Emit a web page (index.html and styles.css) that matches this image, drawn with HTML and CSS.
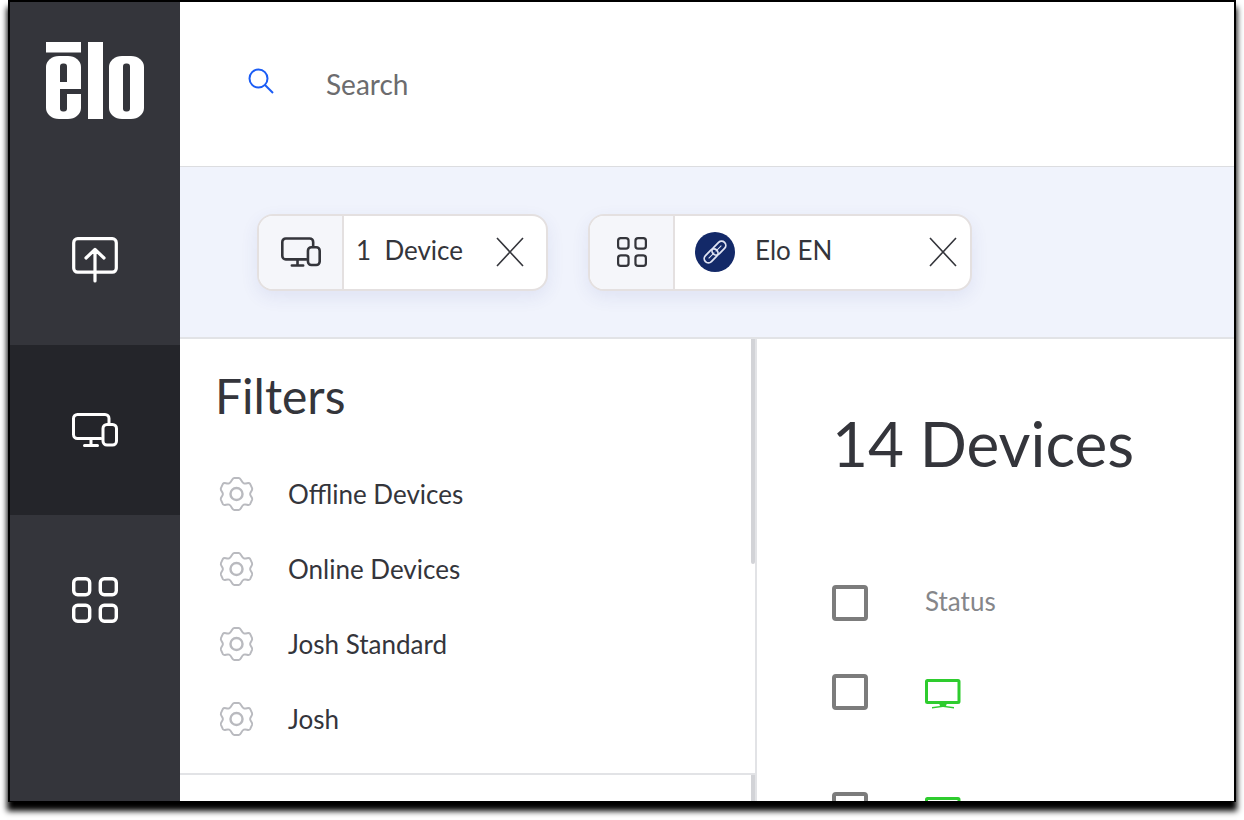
FILE: index.html
```html
<!DOCTYPE html>
<html lang="en">
<head>
<meta charset="utf-8">
<title>Elo Devices</title>
<link rel="stylesheet" href="styles.css">
</head>
<body>
<svg class="defs" aria-hidden="true">
  <symbol id="devices" viewBox="0 0 46 46">
    <g fill="none" stroke="currentColor" stroke-width="3" stroke-linecap="round" stroke-linejoin="round">
      <path d="M29 31.500H5.500a4 4 0 0 1-4-4V11.500a4 4 0 0 1 4-4H33a4 4 0 0 1 4 4V16M19 32v6M12.500 38.500h13"/>
      <rect x="31" y="17.500" width="13.500" height="20.500" rx="4"/>
    </g>
  </symbol>
  <symbol id="grid" viewBox="0 0 46 46">
    <g fill="none" stroke="currentColor" stroke-width="3.400">
      <rect x="1.700" y="1.700" width="16" height="16" rx="4"/>
      <rect x="28.300" y="1.700" width="16" height="16" rx="4"/>
      <rect x="1.700" y="28.300" width="16" height="16" rx="4"/>
      <rect x="28.300" y="28.300" width="16" height="16" rx="4"/>
    </g>
  </symbol>
  <symbol id="gear" viewBox="0 0 36 36">
    <g fill="none" stroke="currentColor" stroke-width="2" stroke-linejoin="round">
      <path d="M15.500 1.500h5c2 0 2.500 4.500 5 5.500s5-1.500 6.500.5l2 4.500c1 2.500-2 3.500-2 6s3 3.500 2 6l-2 4.500c-1.500 2-4-.5-6.500.5s-3 5.500-5 5.500h-5c-2 0-2.500-4.500-5-5.500s-5 1.500-6.500-.5l-2-4.500c-1-2.500 2-3.500 2-6s-3-3.500-2-6l2-4.500c1.500-2 4 .5 6.500-.5s3-5.500 5-5.500z"/>
      <circle cx="18" cy="18" r="6.200" stroke-width="2.500"/>
    </g>
  </symbol>
  <symbol id="close" viewBox="0 0 28 30">
    <path d="M1 1l26 28M27 1L1 29" fill="none" stroke="currentColor" stroke-width="1.600"/>
  </symbol>
  <symbol id="screen" viewBox="0 0 36 30">
    <rect x="1.500" y="1.500" width="32.500" height="22" rx="1" fill="none" stroke="currentColor" stroke-width="3"/>
    <path d="M14 24h8l-1 3 8 1v1.500l-11-1.500-11 1.500V28l8-1z" fill="currentColor"/>
  </symbol>
</svg>
<div class="app">
  <nav class="sidebar" aria-label="Main">
    <a class="brand" href="#" aria-label="Elo">
      <svg width="98" height="78" viewBox="0 0 98 78" fill="#fff">
        <rect width="35" height="10.500"/>
        <rect y="14" width="35" height="63" rx="13" ry="11"/>
        <rect class="cut" x="14" y="21.500" width="7" height="18.500" rx="3"/>
        <rect class="cut" x="14" y="33" width="7" height="7"/>
        <rect class="cut" x="14" y="47" width="22" height="5"/>
        <rect class="cut" x="14" y="47" width="7" height="22.500" rx="3"/>
        <rect x="42" width="15" height="77"/>
        <rect x="63" y="14" width="35" height="63" rx="13" ry="11"/>
        <rect class="cut" x="77" y="21.500" width="7" height="48" rx="3"/>
      </svg>
    </a>
    <a class="nav-item" href="#" aria-label="Publish">
      <svg class="nav-icon" viewBox="0 0 46 46" fill="none" stroke="currentColor" stroke-width="3.200" stroke-linecap="round" stroke-linejoin="round">
        <rect x="1.700" y="1.700" width="42.600" height="33.500" rx="4"/>
        <path d="M23 44V13M14 21l9-8.500 9 8.500"/>
      </svg>
    </a>
    <a class="nav-item active" href="#" aria-label="Devices"><svg class="nav-icon"><use href="#devices"/></svg></a>
    <a class="nav-item" href="#" aria-label="Apps"><svg class="nav-icon"><use href="#grid"/></svg></a>
  </nav>
  <div class="page">
    <header class="search">
      <svg class="search-icon" viewBox="0 0 26 26" fill="none" stroke="#1a5cf5" stroke-width="2"><circle cx="10.500" cy="10.500" r="9"/><path d="M17 17l8 8"/></svg>
      <input class="search-input" type="search" placeholder="Search" aria-label="Search">
    </header>
    <div class="chips">
      <div class="chip">
        <span class="chip-kind"><svg class="chip-icon"><use href="#devices"/></svg></span>
        <span class="chip-label">1&nbsp; Device</span>
        <button class="close" aria-label="Remove device"><svg class="close-icon"><use href="#close"/></svg></button>
      </div>
      <div class="chip chip-app">
        <span class="chip-kind"><svg class="chip-icon"><use href="#grid"/></svg></span>
        <svg class="link-icon" viewBox="0 0 40 40">
          <circle cx="20" cy="20" r="20" fill="#132968"/>
          <g fill="none" stroke="#dfe3f2" stroke-width="1.800" transform="rotate(-45 20 20)">
            <rect x="6.500" y="15.800" width="16" height="8.400" rx="4.200"/>
            <rect x="17.500" y="15.800" width="16" height="8.400" rx="4.200"/>
            <path d="M11 20h8M21 20h8" stroke-width="1"/>
          </g>
        </svg>
        <span class="chip-label">Elo EN</span>
        <button class="close" aria-label="Remove Elo EN"><svg class="close-icon"><use href="#close"/></svg></button>
      </div>
    </div>
    <div class="content">
      <aside class="filters">
        <section class="filter-group">
          <h2>Filters</h2>
          <ul>
            <li><a href="#"><svg class="gear"><use href="#gear"/></svg>Offline Devices</a></li>
            <li><a href="#"><svg class="gear"><use href="#gear"/></svg>Online Devices</a></li>
            <li><a href="#"><svg class="gear"><use href="#gear"/></svg>Josh Standard</a></li>
            <li><a href="#"><svg class="gear"><use href="#gear"/></svg>Josh</a></li>
          </ul>
          <span class="thumb"></span>
        </section>
        <section class="filter-group next"><span class="thumb"></span></section>
      </aside>
      <main class="devices">
        <h1>14 Devices</h1>
        <table>
          <thead>
            <tr><th class="pick"><input type="checkbox" aria-label="Select all devices"></th><th>Status</th></tr>
          </thead>
          <tbody>
            <tr><td class="pick"><input type="checkbox" aria-label="Select device 1"></td><td><svg class="screen" role="img" aria-label="Online"><use href="#screen"/></svg></td></tr>
            <tr><td class="pick"><input type="checkbox" aria-label="Select device 2"></td><td><svg class="screen" role="img" aria-label="Online"><use href="#screen"/></svg></td></tr>
          </tbody>
        </table>
      </main>
    </div>
  </div>
</div>
</body>
</html>
```
FILE: styles.css
```css
* { box-sizing: border-box; }
body {
  margin: 0;
  height: 100vh;
  padding: 0 8px 18px;
  background: #fff;
  color: #34353b;
  font-family: Lato, "Open Sans", sans-serif;
  font-size: 26px;
  overflow: hidden;
}
a { color: inherit; text-decoration: none; }
svg { display: block; flex: none; }
.defs { position: absolute; width: 0; height: 0; }
.app {
  display: flex;
  height: 100%;
  border: 2px solid #000;
  border-bottom-width: 1px;
  background: #fff;
  box-shadow: 0 8px 6px 1px #000;
  overflow: hidden;
}
.sidebar { flex: none; width: 170px; background: #34353b; color: #fff; }
.brand { display: flex; justify-content: center; height: 173px; padding-top: 40px; }
.brand .cut { fill: #34353b; }
.nav-item { display: flex; align-items: center; justify-content: center; height: 170px; }
.nav-item.active { background: #24252a; }
.nav-icon { width: 46px; height: 46px; }
.page { flex: 1; min-width: 0; display: flex; flex-direction: column; }
.search {
  flex: none;
  display: flex;
  align-items: center;
  gap: 52px;
  height: 165px;
  padding: 0 68px;
  border-bottom: 1px solid #dcdde0;
}
.search-icon { width: 26px; height: 26px; margin-bottom: 6px; }
.search-input {
  flex: 1;
  min-width: 0;
  padding: 0;
  border: 0;
  outline: 0;
  background: none;
  font: inherit;
  font-size: 28px;
  color: inherit;
}
.search-input::placeholder { color: #6c6c6e; opacity: 1; }
.chips {
  flex: none;
  display: flex;
  align-items: center;
  gap: 40px;
  height: 172px;
  padding: 0 77px;
  background: #f0f3fc;
  border-bottom: 2px solid #e2e3e6;
}
.chip {
  display: flex;
  align-items: center;
  width: 291px;
  height: 77px;
  border: 2px solid #e4e0e0;
  border-radius: 16px;
  background: #fff;
  box-shadow: 0 6px 18px rgba(60, 70, 150, .09);
  overflow: hidden;
}
.chip-app { width: 384px; }
.chip-kind {
  flex: none;
  align-self: stretch;
  display: flex;
  align-items: center;
  justify-content: center;
  width: 85px;
  margin-right: 12px;
  border-right: 2px solid #e4e0e0;
  background: #f5f6fa;
}
.chip-icon { width: 40px; height: 40px; }
.chip-app .chip-icon { width: 38px; height: 30px; }
.chip-app .chip-kind { margin-right: 20px; }
.chip-label { margin-bottom: 4px; white-space: nowrap; }
.link-icon { width: 40px; height: 40px; margin-right: 20px; }
.close { margin: 0 22px 0 auto; padding: 0; border: 0; background: none; color: #34353b; }
.chip-app .close { margin-right: 13px; }
.close-icon { width: 28px; height: 30px; }
.content { flex: 1; min-height: 0; display: flex; }
.filters {
  flex: none;
  display: flex;
  flex-direction: column;
  width: 577px;
  border-right: 2px solid #e2e3e6;
}
.filter-group { position: relative; flex: none; padding: 27px 35px 17px; border-bottom: 2px solid #e2e3e6; }
.filter-group.next { flex: 1; border: 0; }
.thumb { position: absolute; top: 0; right: 0; width: 4px; height: 225px; border-radius: 0 0 2px 2px; background: #d2d3d7; }
.next .thumb { height: 100%; }
h1, h2 { margin: 0; font-weight: 400; }
h2 { font-size: 48px; line-height: 60px; }
ul { margin: 30px 0 0; padding: 0; list-style: none; }
li a { display: flex; align-items: center; gap: 34px; height: 75px; padding-left: 4px; }
.gear { width: 35px; height: 36px; color: #b9babf; }
.devices { flex: 1; min-width: 0; padding: 66px 75px 0; overflow: hidden; }
h1 { font-size: 62px; line-height: 76px; white-space: nowrap; }
table { width: 100%; margin-top: 92px; border-collapse: collapse; }
th, td { height: 118px; padding: 0; text-align: left; font-weight: 400; vertical-align: middle; }
th { height: 60px; padding-bottom: 4px; color: #85868a; }
.pick { width: 93px; padding: 0; }
.pick input {
  display: block;
  appearance: none;
  width: 36px;
  height: 36px;
  margin: 0;
  border: 4px solid #7c7c7c;
  border-radius: 4px;
  background: #fff;
}
.screen { width: 36px; height: 30px; margin-top: 4px; color: #2ecc2e; }
```
